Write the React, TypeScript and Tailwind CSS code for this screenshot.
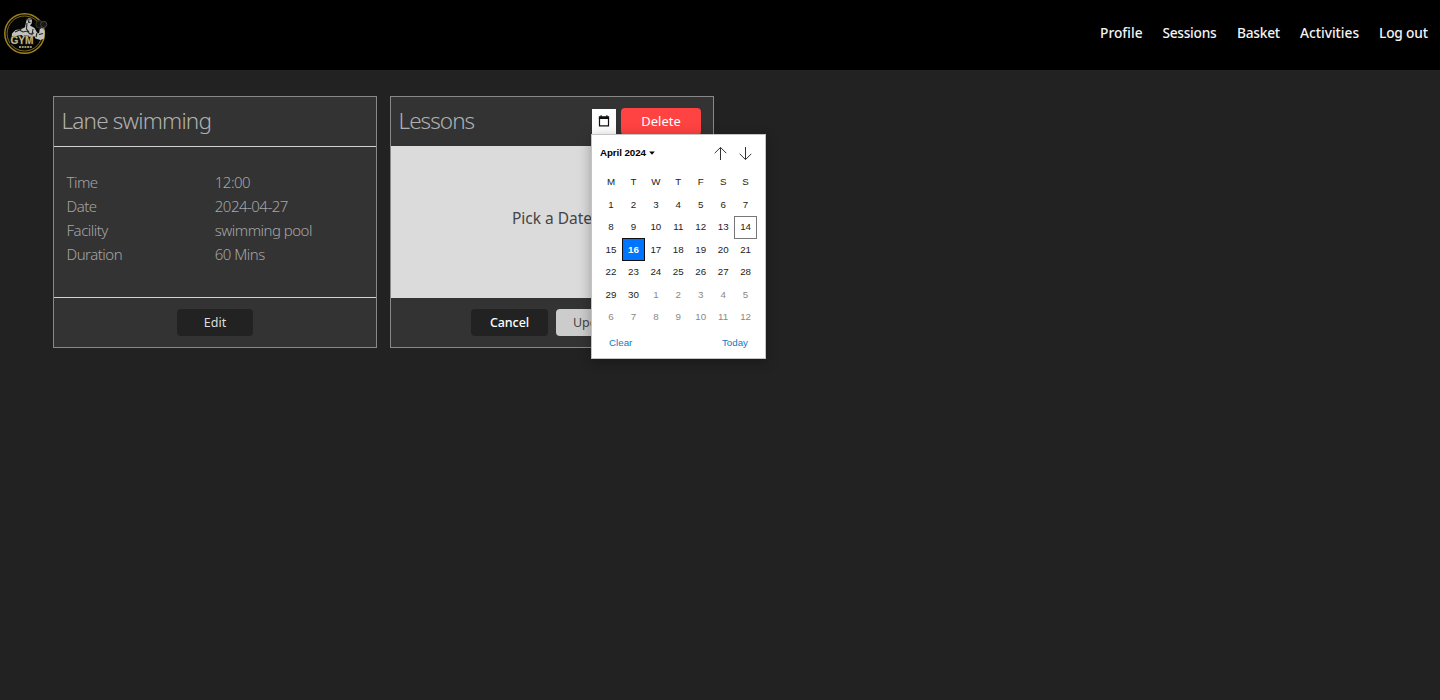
import React from "react";

const nav = [
  { label: "Profile", cls: "w-[42.5px] tracking-[0px]" },
  { label: "Sessions", cls: "w-[54.5px] tracking-[-0.3px]" },
  { label: "Basket", cls: "w-[43px] tracking-[-0.25px]" },
  { label: "Activities", cls: "w-[59px] tracking-[-0.02px]" },
  { label: "Log out", cls: "w-[49px] tracking-[-0.2px]" },
];

const details = [
  ["Time", "12:00"],
  ["Date", "2024-04-27"],
  ["Facility", "swimming pool"],
  ["Duration", "60 Mins"],
];

const days = [
  ...Array.from({ length: 30 }, (_, i) => ({ n: i + 1, next: false })),
  ...Array.from({ length: 12 }, (_, i) => ({ n: i + 1, next: true })),
];

function Logo() {
  return (
    <svg width="46" height="46" viewBox="0 0 46 46" className="block">
      <circle cx="21.6" cy="21.5" r="19.8" fill="#050505" stroke="#9c821c" strokeWidth="1.5" />
      <circle cx="21.6" cy="21.5" r="17.5" fill="none" stroke="#7d6916" strokeWidth="1" />
      <path d="M23.5 8c1-2.4 5-2.4 5.5.2l-.3 3.3-1.7 2 4.5 2.5 2.5 4.5 2 1 .8-4.5 2.4-1 2.6 3-.8 7.5-3.5 1.5-5-1.5-1.5-2.5-2 2.5-6 .5-4.5-4-5.5 1-3 3.5-1.5-1 .5-5 3.5-3.5 5.5-.8 4-2z" fill="#c2c2c0" />
      <path d="M12 20l4.5-2 3.5 2 4-1 3 3 4-1M24 11l-.5 6 2.5 3M30 17l-1 6M21 24l5 .3M36 22.5l4-1M26 7.5l-.5 2.7 2 .2M19 15.5l-2 3M34 21l-1 4" fill="none" stroke="#232321" strokeWidth="1.1" />
      <path d="M23.5 8c1.5-2.3 5-1.9 5.5.2l-3.5-.6-2 2z" fill="#555" />
      <circle cx="36.5" cy="12.3" r="3.7" fill="#121212" stroke="#363634" strokeWidth="1" />
      <circle cx="40.7" cy="12.4" r="3.1" fill="#181818" stroke="#444442" strokeWidth="1" />
      <path d="M7 24.7h24.5v7.8H7z" fill="#070707" />
      <text x="7.5" y="32.4" fontFamily="Liberation Sans, sans-serif" fontWeight="700" fontSize="10" textLength="23" lengthAdjust="spacingAndGlyphs" fill="#d2ccb2" stroke="#806f29" strokeWidth=".3">GYM</text>
      <path d="M16 35h13" stroke="#989278" strokeWidth="2" strokeDasharray="2 .7" />
    </svg>
  );
}

function Card({ title, action, children, footer }: { title: React.ReactNode; action?: React.ReactNode; children: React.ReactNode; footer: React.ReactNode }) {
  return (
    <section className="relative flex h-[252px] w-[324px] flex-col border border-[#888] bg-[#333]">
      <header className="flex h-[49px] items-center justify-between pl-[7.5px] pr-3">
        <h2 className="pb-0.5 text-[22.5px] font-light leading-6 text-[#b0b0b0]">{title}</h2>
        {action}
      </header>
      <div className="h-[152px]">{children}</div>
      <footer className="flex h-[49px] items-start justify-center gap-2 pt-[11px]">{footer}</footer>
    </section>
  );
}

function Calendar() {
  return (
    <div className="absolute left-[200px] top-[37px] h-[225px] w-[175px] border border-[#c4c4c4] bg-white font-['Liberation_Sans',Arial,sans-serif] text-[9.75px] text-[#222] shadow-[0_3px_12px_rgba(0,0,0,0.3)]">
      <div className="flex h-9 items-center pl-2 pr-[13px]">
        <span className="text-[9.75px] font-bold tracking-[-0.07px] text-black">April 2024</span>
        <svg width="6" height="4" viewBox="0 0 6 4" className="ml-[3px]"><path d="M.2.5h5.6L3 3.7z" fill="#000" /></svg>
        <div className="ml-auto flex gap-3 pt-px">
          <svg width="13" height="14" viewBox="0 0 13 14" fill="none" stroke="#333" strokeWidth="1"><path d="M6.5 13V.5M.7 6.2L6.5.4l5.8 5.8" /></svg>
          <svg width="13" height="14" viewBox="0 0 13 14" fill="none" stroke="#333" strokeWidth="1"><path d="M6.5 0v12.5M.7 6.8l5.8 5.8 5.8-5.8" /></svg>
        </div>
      </div>
      <div className="ml-[7.8px] grid w-[157px] auto-rows-[22.5px] grid-cols-7 text-center leading-[22.5px]">
        {"MTWTFSS".split("").map((d, i) => <span key={i}>{d}</span>)}
        {days.map(({ n, next }, i) => (
          <span key={i} className={
            next ? "text-[#888]"
              : n === 16 ? "-mt-px h-[23px] border border-[#101010] bg-[#0075ff] font-bold leading-[22.5px] text-white"
              : n === 14 ? "h-[22.5px] border border-[#777] leading-[20.5px]"
              : ""
          }>{n}</span>
        ))}
      </div>
      <div className="flex justify-between pl-[17px] pr-[17px] pt-2 leading-3 text-[#0b7bc7]">
        <span>Clear</span>
        <span>Today</span>
      </div>
    </div>
  );
}

export default function App() {
  return (
    <div className="min-h-[700px] bg-[#222] font-['Noto_Sans','Open_Sans',sans-serif]">
      <nav className="flex h-[70px] items-start justify-between bg-black pl-[3px] pr-3 pt-3">
        <Logo />
        <div className="flex gap-5 pt-[11px] text-[13.75px] font-medium leading-5 text-[#f4f4f4]">
          {nav.map((n) => <a key={n.label} className={`whitespace-nowrap ${n.cls}`}>{n.label}</a>)}
        </div>
      </nav>
      <main className="flex gap-[13px] pl-[53px] pt-[26px]">
        <Card
          title={<span className="tracking-[-0.8px]">Lane swimming</span>}
          footer={<button className="h-[27px] w-[76px] rounded bg-[#222] pt-px text-[12.5px] text-[#ddd]">Edit</button>}
        >
          <dl className="h-full border-y border-[#d2d2d2] pl-[12.5px] pt-[23px] text-[15px] font-light leading-6 text-[#a5a5a5]">
            {details.map(([k, v]) => (
              <div key={k} className="flex">
                <dt className="w-[148.3px] tracking-[-0.5px]">{k}</dt>
                <dd className="tracking-[-0.52px]">{v}</dd>
              </div>
            ))}
          </dl>
        </Card>
        <Card
          title={<span className="tracking-[-0.95px]">Lessons</span>}
          action={
            <div className="flex items-center gap-[5px]">
              <span className="flex h-[25px] w-6 items-center justify-center bg-white">
                <svg width="12" height="12" viewBox="0 0 12 12" className="-ml-px -mt-px"><path d="M1.5 2h9v8.9h-9z" fill="none" stroke="#111" strokeWidth="1.2" /><path d="M.9 1.4h10.2v2.7H.9zM2.5.3h1.2v2H2.5zM8.3.3h1.2v2H8.3z" fill="#111" /></svg>
              </span>
              <button className="h-[27px] w-20 rounded bg-[#ff4242] text-[13px] text-white">Delete</button>
            </div>
          }
          footer={
            <>
              <button className="h-[27px] w-[77px] rounded bg-[#222] pt-px text-[12.5px] font-medium tracking-[-0.1px] text-white">Cancel</button>
              <button className="h-[27px] w-[77px] rounded bg-[#ccc] pt-px text-[12.5px] text-[#444]">Update</button>
            </>
          }
        >
          <div className="flex h-full items-center justify-center bg-[#dbdbdb] pb-[7px] text-[15.5px] text-[#444]">Pick a Date</div>
          <Calendar />
        </Card>
      </main>
    </div>
  );
}
